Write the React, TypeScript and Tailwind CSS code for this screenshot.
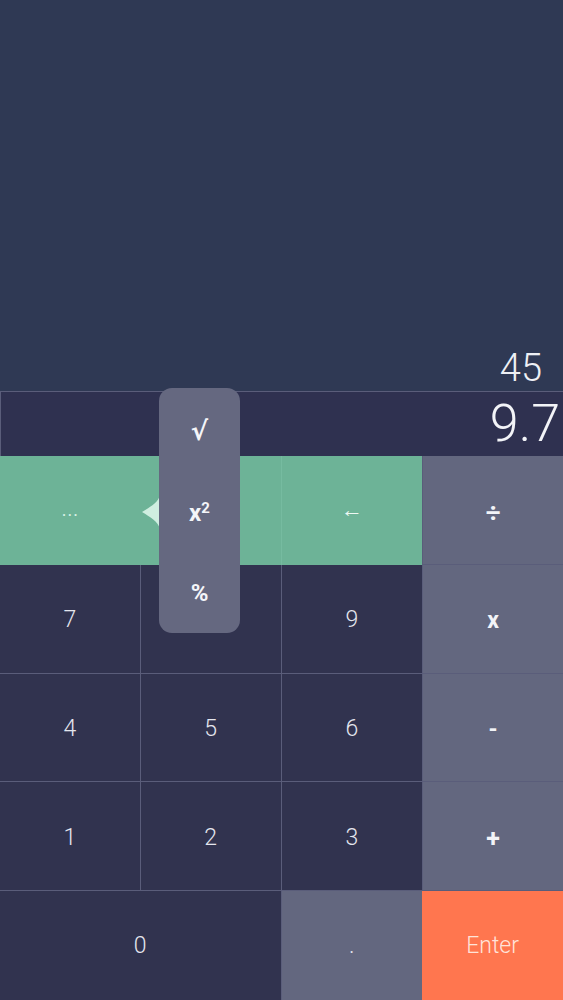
import React from "react";

const line = "border-[#5a5d7a]";

function Key({
  children,
  className = "",
}: {
  children: React.ReactNode;
  className?: string;
}) {
  return (
    <div className={`flex items-center justify-center ${className}`}>{children}</div>
  );
}

export default function App() {
  return (
    <div
      className="relative flex h-[1000px] w-[563px] flex-col overflow-hidden bg-[#2f3954] text-[#e4e6ee]"
      style={{ fontFamily: "Roboto, 'Liberation Sans', sans-serif" }}
    >
      {/* top history */}
      <div className="flex flex-1 items-end justify-end pb-[4px] pr-[21px]">
        <span className="text-[38px] font-light leading-none text-[#eef0f5]">45</span>
      </div>

      {/* current value */}
      <div className={`flex h-[65px] items-center justify-end border-l border-t ${line} bg-[#2f3150] pr-[3px]`}>
        <span className="text-[52px] font-light leading-none text-[#f3f4f8]">9.7</span>
      </div>

      {/* keypad */}
      <div className="grid h-[544px] grid-cols-4 grid-rows-5">
        <Key className="bg-[#6db397]">
          <span className="text-[18px] leading-none tracking-[1px] text-[#d8f1e6]">...</span>
        </Key>
        <Key className="border-r border-[#76bba0] bg-[#6db397]" />
        <Key className="bg-[#6db397]">
          <span className="text-[22px] font-light leading-none text-[#eef8f3]">←</span>
        </Key>
        <Key className={`border-b border-l ${line} bg-[#63677f]`}>
          <span className="pt-[6px] text-[26px] font-bold leading-none text-[#f2f3f7]">÷</span>
        </Key>

        <Key className={`border-b border-r ${line} bg-[#31334f]`}>
          <span className="pt-[4px] text-[23px] font-light">7</span>
        </Key>
        <Key className={`border-b border-r ${line} bg-[#31334f]`}>
          <span className="pt-[4px] text-[23px] font-light">8</span>
        </Key>
        <Key className={`border-b ${line} bg-[#31334f]`}>
          <span className="pt-[4px] text-[23px] font-light">9</span>
        </Key>
        <Key className={`border-b border-l ${line} bg-[#63677f]`}>
          <span className="pt-[5px] text-[23px] font-bold text-[#f2f3f7]">x</span>
        </Key>

        <Key className={`border-b border-r ${line} bg-[#31334f]`}>
          <span className="pt-[4px] text-[23px] font-light">4</span>
        </Key>
        <Key className={`border-b border-r ${line} bg-[#31334f]`}>
          <span className="pt-[4px] text-[23px] font-light">5</span>
        </Key>
        <Key className={`border-b ${line} bg-[#31334f]`}>
          <span className="pt-[4px] text-[23px] font-light">6</span>
        </Key>
        <Key className={`border-b border-l ${line} bg-[#63677f]`}>
          <span className="pt-[5px] text-[23px] font-bold text-[#f2f3f7]">-</span>
        </Key>

        <Key className={`border-b border-r ${line} bg-[#31334f]`}>
          <span className="pt-[4px] text-[23px] font-light">1</span>
        </Key>
        <Key className={`border-b border-r ${line} bg-[#31334f]`}>
          <span className="pt-[4px] text-[23px] font-light">2</span>
        </Key>
        <Key className={`border-b ${line} bg-[#31334f]`}>
          <span className="pt-[4px] text-[23px] font-light">3</span>
        </Key>
        <Key className={`border-b border-l ${line} bg-[#63677f]`}>
          <span className="pt-[5px] text-[25px] font-bold text-[#f2f3f7]">+</span>
        </Key>

        <Key className={`col-span-2 border-r ${line} bg-[#31334f]`}>
          <span className="pt-[2px] text-[23px] font-light">0</span>
        </Key>
        <Key className="bg-[#63677f]">
          <span className="pt-[2px] text-[23px] font-light">.</span>
        </Key>
        <Key className="bg-[#ff764f]">
          <span className="pt-[2px] text-[23px] font-light text-[#ffe3d9]">Enter</span>
        </Key>
      </div>

      {/* popup notch */}
      <svg
        className="absolute left-[140px] top-[495px]"
        width="22"
        height="34"
        viewBox="0 0 22 34"
      >
        <path d="M20 0 C18 8 10 12 2 17 C10 22 18 26 20 34 Z" fill="#cfeee0" />
      </svg>

      {/* popup */}
      <div className="absolute left-[159px] top-[388px] flex h-[245px] w-[81px] flex-col items-center justify-between rounded-[13px] bg-[#656880] pb-[28px] pt-[30px] text-[#f4f5f9]">
        <span className="text-[26px] font-bold leading-none" style={{ fontFamily: "'DejaVu Sans', sans-serif" }}>√</span>
        <span className="text-[24px] font-bold leading-none">
          x<sup className="text-[15px] font-bold">2</sup>
        </span>
        <span className="text-[24px] font-bold leading-none">%</span>
      </div>
    </div>
  );
}
